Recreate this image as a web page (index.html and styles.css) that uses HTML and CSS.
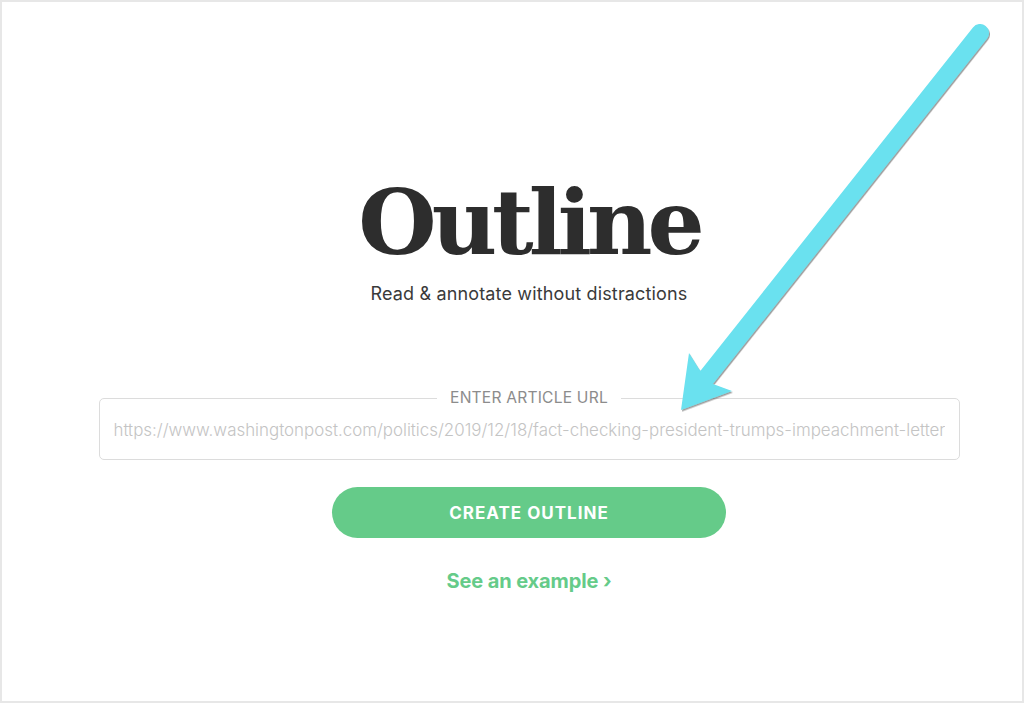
FILE: index.html
```html
<!DOCTYPE html>
<html lang="en">
<head>
<meta charset="utf-8">
<title>Outline</title>
<link rel="stylesheet" href="styles.css">
</head>
<body>
<div class="frame">
  <main class="hero">
    <h1 class="logo">Outline</h1>
    <p class="tagline">Read &amp; annotate without distractions</p>
    <form class="url-form">
      <fieldset class="url-field">
        <legend class="url-legend">ENTER ARTICLE URL</legend>
        <input class="url-input" type="text" placeholder="https://www.washingtonpost.com/politics/2019/12/18/fact-checking-president-trumps-impeachment-letter">
      </fieldset>
      <button class="create-btn" type="button">CREATE OUTLINE</button>
    </form>
    <a class="example-link" href="#">See an example ›</a>
  </main>
  <svg class="annotation" width="1024" height="703" viewBox="0 0 1024 703" aria-hidden="true">
    <defs>
      <filter id="shadow" x="-10%" y="-10%" width="130%" height="130%">
        <feDropShadow dx="1" dy="1.5" stdDeviation="0.5" flood-color="#3a3a3a" flood-opacity="0.5"/>
      </filter>
    </defs>
    <g filter="url(#shadow)" fill="#6ae1ef">
      <line x1="980" y1="33" x2="703" y2="382" stroke="#6ae1ef" stroke-width="18" stroke-linecap="round"/>
      <polygon points="681,410 689,353 699,369 713,384 732,391"/>
    </g>
  </svg>
</div>
</body>
</html>
```

FILE: styles.css
```css
* { box-sizing: border-box; }
html, body { margin: 0; padding: 0; background: #ffffff; }
.frame {
  position: relative;
  width: 1024px;
  height: 703px;
  border: 2px solid #e7e7e7;
  background: #fff;
  overflow: hidden;
}
.hero {
  display: flex;
  flex-direction: column;
  align-items: center;
  padding-top: 165px;
  padding-left: 34px;
  font-family: "Inter", "Liberation Sans", sans-serif;
}
.logo {
  margin: 0;
  font-family: "DejaVu Serif", serif;
  font-weight: bold;
  font-size: 90px;
  line-height: 110px;
  letter-spacing: -5px;
  color: #2d2d2d;
}
.tagline {
  margin: 5px 0 0;
  font-size: 18px;
  line-height: 24px;
  letter-spacing: 0.15px;
  color: #3a3a3a;
}
.url-form {
  display: flex;
  flex-direction: column;
  align-items: center;
  margin-top: 83px;
}
.url-field {
  width: 861px;
  height: 71px;
  margin: 0;
  padding: 0 14px;
  border: 1px solid #dcdcdc;
  border-radius: 5px;
}
.url-legend {
  margin: 0 auto;
  padding: 0 13px;
  font-size: 15.6px;
  line-height: 18px;
  color: #8c8c8c;
  letter-spacing: 0.2px;
}
.url-input {
  width: 100%;
  border: 0;
  outline: 0;
  padding: 0;
  margin-top: 12px;
  font-family: "Inter", "Liberation Sans", sans-serif;
  font-size: 16.9px;
  font-weight: 300;
  line-height: 22px;
  color: #333;
  background: transparent;
}
.url-input::placeholder { color: #c4c4c4; }
.create-btn {
  margin-top: 27px;
  width: 394px;
  height: 51px;
  border: 0;
  border-radius: 26px;
  background: #65cb89;
  color: #fff;
  font-family: "Inter", "Liberation Sans", sans-serif;
  font-weight: 700;
  font-size: 17px;
  letter-spacing: 1px;
}
.example-link {
  margin-top: 30px;
  font-size: 20px;
  line-height: 26px;
  font-weight: 700;
  letter-spacing: -0.1px;
  color: #65cb89;
  text-decoration: none;
}
.annotation {
  position: absolute;
  left: -2px;
  top: -2px;
  pointer-events: none;
}
```
